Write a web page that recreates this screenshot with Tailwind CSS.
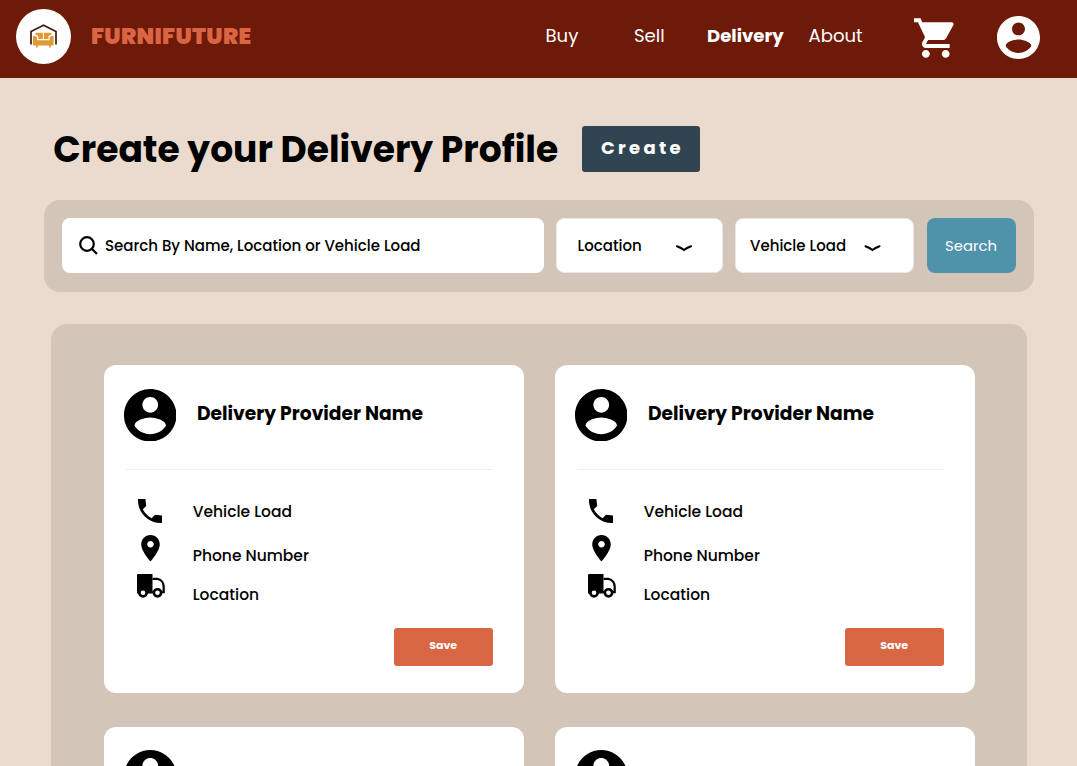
<!DOCTYPE html>
<html lang="en">
<head>
<meta charset="utf-8">
<title>Furnifuture</title>
<script src="https://cdn.jsdelivr.net/npm/@tailwindcss/browser@4"></script>
</head>
<body class="font-['Poppins','Inter',sans-serif] text-black bg-[#ebdbce] h-[766px] overflow-hidden whitespace-nowrap leading-none flex flex-col">

<svg class="hidden">
  <symbol id="account" viewBox="2 2 20 20"><path d="M12 2C6.480 2 2 6.480 2 12s4.480 10 10 10 10-4.480 10-10S17.520 2 12 2zm0 3c1.660 0 3 1.340 3 3s-1.340 3-3 3-3-1.340-3-3 1.340-3 3-3zm0 14.200c-2.500 0-4.710-1.280-6-3.220.03-1.990 4-3.080 6-3.080 1.990 0 5.970 1.090 6 3.080-1.290 1.940-3.500 3.220-6 3.220z" fill="currentColor"/></symbol>
  <symbol id="phone" viewBox="3 3 18 18"><path d="M21 15.460l-5.270-.61-2.520 2.520c-2.830-1.440-5.150-3.750-6.590-6.590l2.530-2.530L8.540 3H3.030C2.450 13.180 10.820 21.550 21 20.970v-5.510z" fill="currentColor"/></symbol>
  <symbol id="pin" viewBox="5 2 14 20"><path d="M12 2C8.130 2 5 5.130 5 9c0 5.250 7 13 7 13s7-7.750 7-13c0-3.870-3.130-7-7-7zm0 9.500c-1.380 0-2.500-1.120-2.500-2.500s1.120-2.500 2.500-2.500 2.500 1.120 2.500 2.500-1.120 2.500-2.500 2.500z" fill="currentColor"/></symbol>
  <symbol id="truck" viewBox="0 0 28 24">
    <path d="M1 0H15.500V19.500H0V1Q0 0 1 0Z" fill="currentColor"/>
    <path d="M15.500 4.900H20.500C24.800 5.600 26.700 9.500 26.700 13V18.200H15" fill="none" stroke="currentColor" stroke-width="2.200"/>
    <circle cx="6" cy="18.800" r="3.600" fill="white" stroke="currentColor" stroke-width="2.600"/>
    <circle cx="20.500" cy="18.800" r="3.600" fill="white" stroke="currentColor" stroke-width="2.600"/>
  </symbol>
  <symbol id="chevron" viewBox="0 0 16 7"><path d="M1 1.200C4 2.300 6.500 3.800 8 5.100C9.500 3.800 12 2.300 15 1.200" fill="none" stroke="currentColor" stroke-width="2" stroke-linecap="round" stroke-linejoin="round"/></symbol>
</svg>

<header class="h-[77.7px] shrink-0 bg-[#6e1a08] flex items-start text-white">
  <div class="ml-4 mt-[9px] size-[55px] rounded-full bg-white flex justify-center items-center">
    <svg class="w-[27px] h-[25px] -mt-px" viewBox="0 0 27 25">
      <path d="M1 20.500V7.500L13.500 1.300L26 7.500V20.500" fill="none" stroke="#3f1c0c" stroke-width="1.700"/>
      <g fill="#e09a33">
        <path d="M6.200 8.800H12.900V15H8.300V12.200Q7.500 11 5.500 11V9.500Z"/>
        <path d="M13.900 8.800H20.600L21.300 9.500V11Q19.300 11 18.500 12.200V15H13.900Z"/>
        <path d="M3 12.600Q3 11.700 4.500 11.900Q7 12.200 7 13.500V16.300H19.700V13.500Q19.700 12.200 22 11.900Q23.600 11.700 23.600 12.600V20.500Q23.600 21.500 22.600 21.500H4Q3 21.500 3 20.500Z"/>
        <path d="M6 21H7.800V23.500H6ZM19 21H20.800V23.500H19Z"/>
      </g>
    </svg>
  </div>
  <div class="ml-[20px] w-[452.500px] mt-[25px] leading-[23px] text-[22.700px] font-black tracking-[0.300px] text-[#db6543]">FURNIFUTURE</div>
  <nav class="flex mt-[25px] h-[22px] leading-[22px] text-[18.100px] font-normal">
    <a class="ml-[2px] w-[88.500px]">Buy</a>
    <a class="w-[73px]">Sell</a>
    <a class="w-[101.500px] font-bold">Delivery</a>
    <a class="w-[105.500px]">About</a>
  </nav>
  <svg class="mt-[17.500px] w-[40px] h-[40px] shrink-0" viewBox="1 2 20.200 20"><path fill="currentColor" d="M7 18c-1.100 0-1.990.9-1.990 2S5.900 22 7 22s2-.9 2-2-.9-2-2-2zM1 2v2h2l3.600 7.590-1.350 2.450c-.16.28-.25.61-.25.96 0 1.100.9 2 2 2h12v-2H7.420c-.14 0-.25-.11-.25-.25l.03-.12.9-1.630h7.450c.75 0 1.410-.41 1.750-1.030l3.580-6.490c.08-.14.12-.31.12-.48 0-.55-.45-1-1-1H5.210l-.94-2H1zm16 16c-1.100 0-1.990.9-1.990 2s.89 2 1.990 2 2-.9 2-2-.9-2-2-2z"/></svg>
  <svg class="ml-auto mr-[37px] mt-[15.500px] size-[43px] shrink-0"><use href="#account"/></svg>
</header>

<section class="flex items-start pl-[53.300px] pt-[48.800px]">
  <h1 class="w-[528.700px] leading-[48px] -mb-[2px] text-[36.050px] font-bold">Create your Delivery Profile</h1>
  <button class="w-[118.500px] h-[46px] rounded-[3px] bg-[#314452] text-white text-[18px] font-bold tracking-[3.300px] text-left pl-[19px] pb-[2px]">Create</button>
</section>

<section class="ml-[44px] mt-[27.700px] w-[989.500px] h-[91.600px] shrink-0 rounded-2xl bg-[#d4c5b9] px-[18px] pt-[18.300px] flex items-start text-[15px] font-medium">
  <div class="w-[481.500px] h-[55px] rounded-lg bg-white flex items-center pl-[17px]">
    <svg class="size-[19px] -mt-px" viewBox="0 0 19 19" fill="none" stroke="black" stroke-width="2.200"><circle cx="8" cy="8" r="6.800"/><path d="M12.800 12.800L18 18"/></svg>
    <span class="ml-[7px]">Search By Name, Location or Vehicle Load</span>
  </div>
  <div class="ml-[12.500px] w-[167px] h-[55px] rounded-lg bg-white border border-[#e9e7e8] flex items-center pl-[20.500px]">
    <span class="w-[98.500px]">Location</span>
    <svg class="w-4 h-[7px] mt-[5px]"><use href="#chevron"/></svg>
  </div>
  <div class="ml-[12px] w-[179px] h-[55px] rounded-lg bg-white border border-[#e9e7e8] flex items-center pl-[14px]">
    <span class="w-[114px]">Vehicle Load</span>
    <svg class="w-[17px] h-[7px] mt-[5px]"><use href="#chevron"/></svg>
  </div>
  <button class="ml-[12.500px] w-[89px] h-[55px] rounded-lg bg-[#4f93aa] text-white font-normal text-[14.800px] flex items-center justify-center">Search</button>
</section>

<main class="ml-[51px] mt-[32.200px] w-[976px] flex-1 min-h-0 overflow-hidden rounded-t-2xl bg-[#d4c5b9] pl-[52.700px] pt-[41.300px] grid grid-cols-[420px_420px] gap-x-[31px] gap-y-[34.600px] content-start">

  <article class="h-[327.300px] rounded-xl bg-white pt-[23.300px]">
    <div class="flex items-start pl-[20.300px] h-[80.700px]">
      <svg class="size-[52.500px]"><use href="#account"/></svg>
      <h2 class="ml-[20.500px] mt-[13px] leading-6 text-[18.700px] font-bold">Delivery Provider Name</h2>
    </div>
    <hr class="ml-[22px] w-[367.500px] border-[#eeeeee]">
    <div class="flex pl-[33px] h-[157.500px] text-[15.500px] font-medium">
      <div class="w-[56px] pt-[29px] flex flex-col items-start">
        <svg class="ml-[1.500px] size-[24px]"><use href="#phone"/></svg>
        <svg class="ml-[4px] mt-[12px] w-[19px] h-[26.500px]"><use href="#pin"/></svg>
        <svg class="mt-[12px] w-[28px] h-[24px]"><use href="#truck"/></svg>
      </div>
      <ul class="pt-[31.500px] leading-5">
        <li>Vehicle Load</li>
        <li class="mt-[24px]">Phone Number</li>
        <li class="mt-[19px]">Location</li>
      </ul>
    </div>
    <button class="block ml-[290px] w-[99px] h-[38.500px] rounded-[3px] bg-[#d96643] text-white text-[11px] font-bold pb-[3px]">Save</button>
  </article>

  <article class="h-[327.300px] rounded-xl bg-white pt-[23.300px]">
    <div class="flex items-start pl-[20.300px] h-[80.700px]">
      <svg class="size-[52.500px]"><use href="#account"/></svg>
      <h2 class="ml-[20.500px] mt-[13px] leading-6 text-[18.700px] font-bold">Delivery Provider Name</h2>
    </div>
    <hr class="ml-[22px] w-[367.500px] border-[#eeeeee]">
    <div class="flex pl-[33px] h-[157.500px] text-[15.500px] font-medium">
      <div class="w-[56px] pt-[29px] flex flex-col items-start">
        <svg class="ml-[1.500px] size-[24px]"><use href="#phone"/></svg>
        <svg class="ml-[4px] mt-[12px] w-[19px] h-[26.500px]"><use href="#pin"/></svg>
        <svg class="mt-[12px] w-[28px] h-[24px]"><use href="#truck"/></svg>
      </div>
      <ul class="pt-[31.500px] leading-5">
        <li>Vehicle Load</li>
        <li class="mt-[24px]">Phone Number</li>
        <li class="mt-[19px]">Location</li>
      </ul>
    </div>
    <button class="block ml-[290px] w-[99px] h-[38.500px] rounded-[3px] bg-[#d96643] text-white text-[11px] font-bold pb-[3px]">Save</button>
  </article>

  <article class="h-[327.300px] rounded-xl bg-white pt-[23.300px] pl-[20.300px]">
    <svg class="size-[52.500px]"><use href="#account"/></svg>
  </article>
  <article class="h-[327.300px] rounded-xl bg-white pt-[23.300px] pl-[20.300px]">
    <svg class="size-[52.500px]"><use href="#account"/></svg>
  </article>
</main>
</body>
</html>
